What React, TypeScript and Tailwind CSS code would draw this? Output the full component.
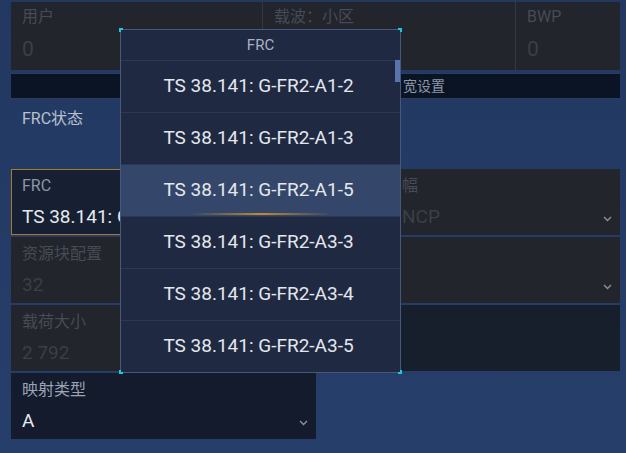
const font = { fontFamily: 'Roboto, "Noto Sans CJK SC", sans-serif' };

function Chevron({ className }: { className?: string }) {
  return (
    <svg width="9" height="6" viewBox="0 0 9 6" className={className}>
      <path d="M1 1l3.5 3.5L8 1" fill="none" stroke="currentColor" strokeWidth="1.3" />
    </svg>
  );
}

function Field({
  label,
  value,
  bg = 'bg-[#22252c]',
  labelColor = 'text-[#464b55]',
  valueColor = 'text-[#3b3f47]',
  chevron = false,
  pad = 'px-[11px]',
}: {
  label: string;
  value: string;
  bg?: string;
  labelColor?: string;
  valueColor?: string;
  chevron?: boolean;
  pad?: string;
}) {
  return (
    <div className={`relative flex h-[66px] flex-col pt-[7px] ${pad} ${bg}`}>
      <span className={`h-[20px] text-[16px] leading-[20px] ${labelColor}`}>{label}</span>
      <span className={`mt-[9px] h-[24px] text-[19px] leading-[24px] ${valueColor}`}>{value}</span>
      {chevron && <Chevron className="absolute right-[8px] bottom-[13px] text-[#8c94a4]" />}
    </div>
  );
}

const items = [
  'TS 38.141: G-FR2-A1-2',
  'TS 38.141: G-FR2-A1-3',
  'TS 38.141: G-FR2-A1-5',
  'TS 38.141: G-FR2-A3-3',
  'TS 38.141: G-FR2-A3-4',
  'TS 38.141: G-FR2-A3-5',
];

function Corner({ pos }: { pos: string }) {
  return <div className={`absolute h-[4px] w-[4px] border-[#22c6dd] ${pos}`} />;
}

function Dropdown() {
  return (
    <div className="absolute left-[120px] top-[29px] h-[344px] w-[281px]">
      <div className="relative flex h-full flex-col border border-[#46597c] bg-[#1f2a42]">
        <div className="flex h-[30px] shrink-0 items-center justify-center text-[15px] text-[#a9b1c1]">FRC</div>
        {items.map((t, i) => (
          <div
            key={t}
            className={`relative flex h-[52px] shrink-0 items-center justify-center border-t border-[#2b3853] pr-[4px] text-[19px] text-[#e4e7ed] ${
              i === 2 ? 'bg-[#34476a]' : ''
            }`}
          >
            {t}
            {i === 2 && (
              <div className="absolute bottom-[1px] left-[70px] h-[2px] w-[140px] bg-gradient-to-r from-transparent via-[#c08a2c] to-transparent" />
            )}
          </div>
        ))}
        <div className="absolute right-0 top-[30px] h-[22px] w-[5px] bg-[#5975ab]" />
      </div>
      <Corner pos="-left-[1px] -top-[1px] border-l-2 border-t-2" />
      <Corner pos="-right-[1px] -top-[1px] border-r-2 border-t-2" />
      <Corner pos="-left-[1px] -bottom-[1px] border-l-2 border-b-2" />
      <Corner pos="-right-[1px] -bottom-[1px] border-r-2 border-b-2" />
    </div>
  );
}

export default function App() {
  return (
    <div
      className="relative h-[453px] w-[626px] overflow-hidden bg-gradient-to-b from-[#223861] to-[#263f6a] pl-[11px] pr-[6px] pt-[2px]"
      style={font}
    >
      <div className="flex h-[68px]">
        <div className="flex w-[251px] flex-col bg-[#22252c] px-[11px] pt-[5px]">
          <span className="text-[16px] leading-[20px] text-[#464b55]">用户</span>
          <span className="mt-[9px] text-[21px] leading-[26px] text-[#3b3f47]">0</span>
        </div>
        <div className="w-px bg-[#323741]" />
        <div className="flex w-[252px] flex-col bg-[#22252c] px-[11px] pt-[5px]">
          <span className="text-[16px] leading-[20px] text-[#464b55]">载波：小区</span>
        </div>
        <div className="w-px bg-[#323741]" />
        <div className="flex flex-1 flex-col bg-[#22252c] px-[11px] pt-[5px]">
          <span className="text-[16px] leading-[20px] text-[#464b55]">BWP</span>
          <span className="mt-[9px] text-[21px] leading-[26px] text-[#3b3f47]">0</span>
        </div>
      </div>

      <div className="mt-[3px] flex h-[26px] items-center border-y border-[#2c3e5e] bg-[#0b1424] pl-[392px] text-[14px] text-[#8d96a7]">
        宽设置
      </div>

      <div className="h-[70px] px-[11px] pt-[8px] text-[16px] text-[#b9c0cc]">FRC状态</div>

      <div className="grid grid-cols-[305px_302px] gap-x-[2px] gap-y-[2px]">
        <div className="flex h-[66px] flex-col border border-[#a67b2b] bg-[#172033] px-[10px] pt-[6px]">
          <span className="text-[16px] leading-[20px] text-[#8d96a6]">FRC</span>
          <span className="mt-[9px] text-[19px] leading-[24px] text-[#e6e9ee]">TS 38.141: G</span>
        </div>
        <Field label="幅" value="NCP" pad="pl-[84px] pr-[11px]" chevron />
        <Field label="资源块配置" value="32" />
        <Field label="" value="" chevron />
        <Field label="载荷大小" value="2 792" />
        <div className="h-[66px] bg-[#171e2c]" />
        <Field
          label="映射类型"
          value="A"
          bg="bg-[#131b2c]"
          labelColor="text-[#9ba4b4]"
          valueColor="text-[#e6e9ee]"
          chevron
        />
      </div>

      <Dropdown />
    </div>
  );
}
